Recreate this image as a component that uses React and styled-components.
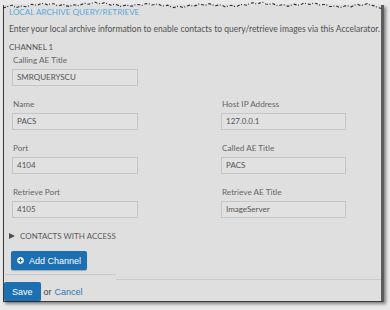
import React from "react";
import styled, { createGlobalStyle } from "styled-components";
import { FaPlusCircle } from "react-icons/fa";

const GlobalStyle = createGlobalStyle`
  html, body {
    margin: 0;
    padding: 0;
    background: #ebebeb;
  }
  * {
    box-sizing: border-box;
  }
`;

const Page = styled.div`
  position: relative;
  width: 390px;
  height: 310px;
  overflow: hidden;
  background: #e9e9e9;
  padding-top: 5px;
`;

const Sheet = styled.div`
  width: 381px;
  margin-left: 3px;
  background: #dfdfdf;
  border-left: 1px solid #3c3c3c;
  border-right: 3px solid #5c5c5c;
  border-bottom: 1px solid #3a3a3a;
  box-shadow: 2px 2px 3px rgba(0, 0, 0, 0.45);
  display: flex;
  flex-direction: column;
  font-family: "Lato", "Liberation Sans", sans-serif;
`;

const TornEdge = styled.svg`
  position: absolute;
  top: 0;
  left: 3px;
`;

const Body = styled.div`
  padding: 1px 0 0 5px;
  display: flex;
  flex-direction: column;
`;

const Title = styled.div`
  font-size: 8.1px;
  line-height: 12px;
  color: #58a9dc;
  text-transform: uppercase;
`;

const Intro = styled.div`
  margin-top: 5px;
  font-size: 8.5px;
  line-height: 12px;
  color: #505050;
  white-space: nowrap;
`;

const ChannelHeading = styled.div`
  margin-top: 5.5px;
  font-size: 8px;
  line-height: 12px;
  color: #555;
  text-transform: uppercase;
`;

const FieldGrid = styled.div`
  margin-top: 1.5px;
  padding-left: 3px;
  display: grid;
  grid-template-columns: 126px 125px;
  column-gap: 83px;
  row-gap: 12px;
`;

const Field = styled.div`
  display: flex;
  flex-direction: column;
`;

const Label = styled.div`
  padding-left: 1px;
  font-size: 8.2px;
  line-height: 12px;
  color: #666;
  margin-bottom: 3px;
`;

const Input = styled.div`
  height: 17px;
  border: 1px solid #c6c6c6;
  background: #e1e1e1;
  padding-left: 4px;
  font-size: 8px;
  line-height: 15px;
  color: #555;
`;

const Disclosure = styled.div`
  margin-top: 11.5px;
  display: flex;
  align-items: center;
  gap: 5px;
  font-size: 8px;
  line-height: 12px;
  color: #5a5a5a;
  text-transform: uppercase;
`;

const Caret = styled.span`
  width: 0;
  height: 0;
  border-left: 6px solid #4d4d4d;
  border-top: 3.5px solid transparent;
  border-bottom: 3.5px solid transparent;
`;

const Rule = styled.div`
  height: 1px;
  background: #cbcbcb;
  margin-left: ${(p) => p.$indent || 0}px;
  margin-top: ${(p) => p.$top || 0}px;
  width: ${(p) => (p.$width ? `${p.$width}px` : "auto")};
  flex: ${(p) => (p.$width ? "none" : 1)};
`;

const Seam = styled.div`
  display: flex;
  align-items: flex-start;
  margin-top: 4px;
  height: 6px;
`;

const BlueButton = styled.button`
  display: flex;
  align-items: center;
  justify-content: center;
  gap: 5px;
  height: 19px;
  padding: 0 ${(p) => p.$pad}px;
  border: none;
  border-radius: 2px;
  background: #1c6fb1;
  box-shadow: 0 1px 1px rgba(0, 0, 0, 0.25);
  color: #fff;
  font-family: "Liberation Sans", Arial, sans-serif;
  font-size: 9px;
  cursor: pointer;
`;

const AddRow = styled.div`
  margin: 6px 0 0 7px;
  display: flex;
`;

const Footer = styled.div`
  margin-top: 2px;
  display: flex;
  align-items: center;
  gap: 3px;
  font-family: "Liberation Sans", Arial, sans-serif;
  font-size: 9px;
  color: #444;
`;

const CancelLink = styled.a`
  color: #2a78b8;
  text-decoration: none;
`;

const edgePoints = (() => {
  const pts = [];
  const n = 120;
  for (let i = 0; i <= n; i++) {
    const x = (i / n) * 380;
    const wave = Math.sin(i * 0.37) * 1.2 + Math.sin(i * 1.9) * 0.9 + Math.cos(i * 0.11) * 0.8;
    let y = 5 + wave;
    if (i < 4) y = 8 - i;
    if (i > n - 3) y = 6 + (i - (n - 3));
    pts.push(`${x.toFixed(1)},${y.toFixed(1)}`);
  }
  return pts.join(" ");
})();

const fields = [
  [{ label: "Calling AE Title", value: "SMRQUERYSCU" }, null],
  [
    { label: "Name", value: "PACS" },
    { label: "Host IP Address", value: "127.0.0.1" },
  ],
  [
    { label: "Port", value: "4104" },
    { label: "Called AE Title", value: "PACS" },
  ],
  [
    { label: "Retrieve Port", value: "4105" },
    { label: "Retrieve AE Title", value: "ImageServer" },
  ],
];

const App = () => {
  return (
    <Page>
      <GlobalStyle />
      <Sheet>
        <Body>
          <Title>Local Archive Query/Retrieve</Title>
          <Intro>
            Enter your local archive information to enable contacts to
            query/retrieve images via this Accelarator.
          </Intro>
          <ChannelHeading>Channel 1</ChannelHeading>
          <FieldGrid>
            {fields.flat().map((f, i) =>
              f ? (
                <Field key={i}>
                  <Label>{f.label}</Label>
                  <Input>{f.value}</Input>
                </Field>
              ) : (
                <div key={i} />
              )
            )}
          </FieldGrid>
          <Disclosure>
            <Caret />
            Contacts with access
          </Disclosure>
        </Body>
        <Rule $indent={6} $top={3.5} />
        <AddRow>
          <BlueButton $pad={6}>
            <FaPlusCircle size={7} />
            Add Channel
          </BlueButton>
        </AddRow>
        <Seam>
          <Rule $width={111} $indent={1} />
          <Rule $top={5} />
        </Seam>
        <Footer>
          <BlueButton $pad={8}>Save</BlueButton>
          or <CancelLink href="#">Cancel</CancelLink>
        </Footer>
      </Sheet>
      <TornEdge width="381" height="12" viewBox="0 0 381 12">
        <polyline
          points={edgePoints}
          fill="none"
          stroke="#2e2e2e"
          strokeWidth="1.1"
          strokeDasharray="3 1.5 1 2"
        />
      </TornEdge>
    </Page>
  );
};

export default App;
